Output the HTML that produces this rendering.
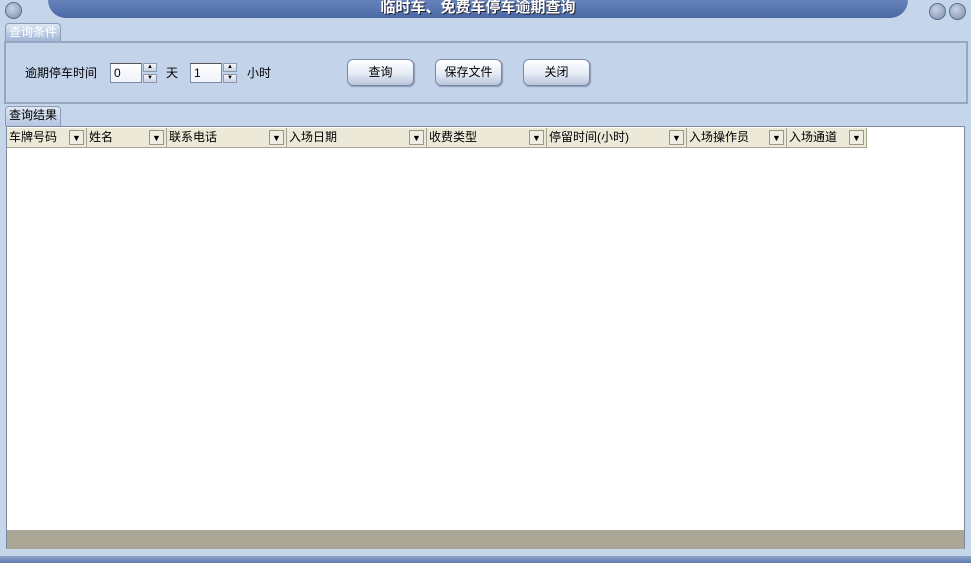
<!DOCTYPE html>
<html><head><meta charset="utf-8"><style>
*{box-sizing:border-box;margin:0;padding:0}
body{width:971px;height:563px;background:#c5d5ea;font-family:"Liberation Sans","Noto Sans CJK SC",sans-serif;font-size:12px;position:relative;overflow:hidden;color:#000}
.abs{position:absolute}
.title{left:48px;top:0;width:860px;height:18px;background:linear-gradient(#6683bb,#4a68a4);border-radius:0 0 30px 30px;color:#fff;font-weight:bold;font-size:15px;text-align:center;line-height:16px;text-shadow:1px 1px 0 #223}
.circ{width:17px;height:17px;border-radius:50%;background:radial-gradient(circle at 40% 35%,#c8d2e4,#7d8fae);border:1px solid #5d6f90}
.tab{background:linear-gradient(#dbe5f4,#9fb3d6);border:1px solid #8b9bb8;border-bottom:none;border-radius:4px 4px 0 0;color:#fff;font-size:12px;line-height:16px;padding:0 3px}
.group{left:4px;top:41px;width:964px;height:63px;border:2px solid #97a7c0;background:#c3d3ea}
.inp{background:#fff;border:1px solid #7c8aa6;border-top-color:#555;height:20px;width:32px;padding-left:3px;line-height:18px;font-size:12px;background:linear-gradient(#fff,#eef2fa)}
.spin{width:14px;height:20px}
.spin div{height:9px;margin-bottom:2px;background:linear-gradient(#f4f6fa,#c9d2e2);border:1px solid #8c9ab3;font-size:6px;text-align:center;line-height:7px}
.btn{width:67px;height:27px;border:1px solid #7b88a4;border-radius:6px;background:linear-gradient(#ffffff,#e5ebf6 55%,#b8c4da);text-align:center;line-height:25px;font-size:12px;box-shadow:1px 1px 1px #8a97b0}
.grid{left:6px;top:126px;width:959px;height:423px;background:#fff;border:1px solid #7e8aa0}
.hdr{top:1px;height:20px;background:#ece9d8;border-right:1px solid #a7a48f;border-bottom:1px solid #a7a48f;line-height:19px;padding-left:2px;font-size:12px}
.dd{position:absolute;right:2px;top:2px;width:15px;height:15px;border:1px solid #9a9784;background:#f0eee2;font-size:9px;text-align:center;line-height:14px;color:#000}
</style></head><body>
<div class="abs circ" style="left:5px;top:2px"></div>
<div class="abs title">临时车、免费车停车逾期查询</div>
<div class="abs circ" style="left:929px;top:3px"></div>
<div class="abs circ" style="left:949px;top:3px"></div>
<div class="abs tab" style="left:5px;top:23px;height:19px">查询条件</div>
<div class="abs group"></div>
<div class="abs" style="left:25px;top:64px;line-height:18px">逾期停车时间</div>
<div class="abs inp" style="left:110px;top:63px">0</div>
<div class="abs spin" style="left:143px;top:63px"><div>▲</div><div>▼</div></div>
<div class="abs" style="left:166px;top:64px;line-height:18px">天</div>
<div class="abs inp" style="left:190px;top:63px">1</div>
<div class="abs spin" style="left:223px;top:63px"><div>▲</div><div>▼</div></div>
<div class="abs" style="left:247px;top:64px;line-height:18px">小时</div>
<div class="abs btn" style="left:347px;top:59px">查询</div>
<div class="abs btn" style="left:435px;top:59px">保存文件</div>
<div class="abs btn" style="left:523px;top:59px">关闭</div>
<div class="abs tab" style="left:5px;top:106px;height:20px;color:#000;background:linear-gradient(#e0e8f5,#b4c4e0)">查询结果</div>
<div class="abs grid">
<div class="abs hdr" style="left:0;width:80px">车牌号码<span class="dd">▼</span></div>
<div class="abs hdr" style="left:80px;width:80px">姓名<span class="dd">▼</span></div>
<div class="abs hdr" style="left:160px;width:120px">联系电话<span class="dd">▼</span></div>
<div class="abs hdr" style="left:280px;width:140px">入场日期<span class="dd">▼</span></div>
<div class="abs hdr" style="left:420px;width:120px">收费类型<span class="dd">▼</span></div>
<div class="abs hdr" style="left:540px;width:140px">停留时间(小时)<span class="dd">▼</span></div>
<div class="abs hdr" style="left:680px;width:100px">入场操作员<span class="dd">▼</span></div>
<div class="abs hdr" style="left:780px;width:80px">入场通道<span class="dd">▼</span></div>
<div class="abs" style="left:0;top:403px;width:957px;height:19px;background:#aba797"></div>
</div>
<div class="abs" style="left:0;top:556px;width:971px;height:7px;background:linear-gradient(#8fa4c8,#5f7cb0)"></div>
</body></html>
